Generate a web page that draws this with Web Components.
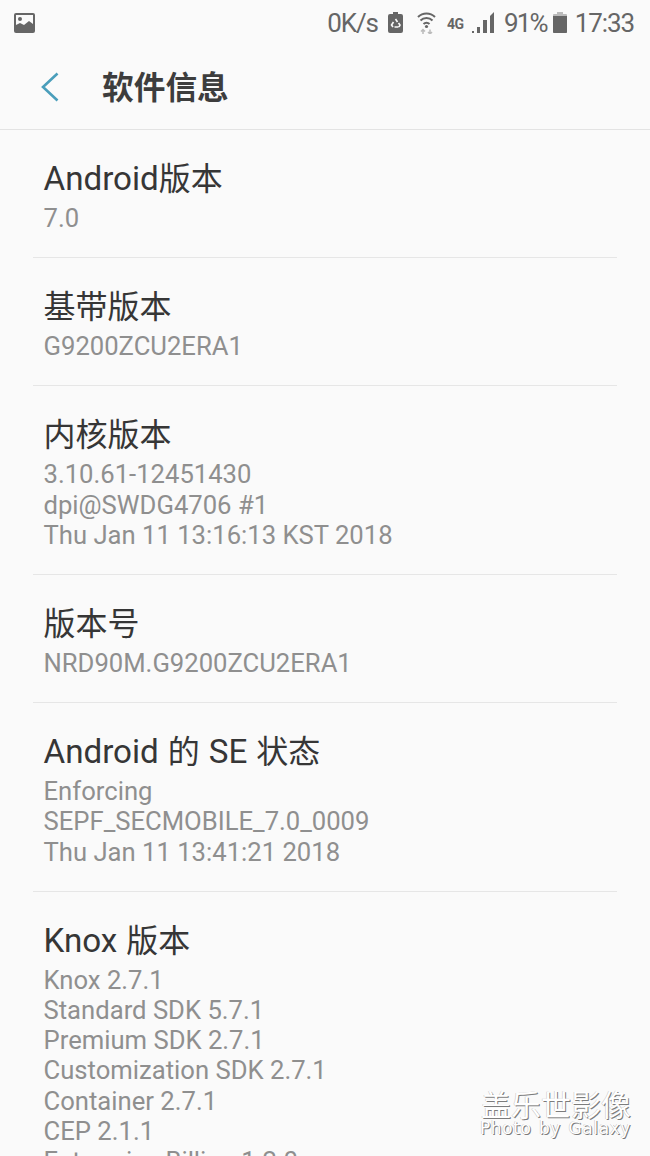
<!DOCTYPE html>
<html lang="zh">
<head>
<meta charset="utf-8">
<title>软件信息</title>
<style>
  html, body { margin: 0; height: 1156px; overflow: hidden; background: #fafafa; }
  body { font-family: Roboto, "Noto Sans CJK SC", sans-serif; }
</style>
</head>
<body>
<settings-page>
  <status-bar></status-bar>
  <app-header>软件信息</app-header>
  <info-row title="Android版本">7.0</info-row>
  <info-row title="基带版本">G9200ZCU2ERA1</info-row>
  <info-row title="内核版本">3.10.61-12451430<br>dpi@SWDG4706 #1<br>Thu Jan 11 13:16:13 KST 2018</info-row>
  <info-row title="版本号">NRD90M.G9200ZCU2ERA1</info-row>
  <info-row title="Android 的 SE 状态">Enforcing<br>SEPF_SECMOBILE_7.0_0009<br>Thu Jan 11 13:41:21 2018</info-row>
  <info-row title="Knox 版本">Knox 2.7.1<br>Standard SDK 5.7.1<br>Premium SDK 2.7.1<br>Customization SDK 2.7.1<br>Container 2.7.1<br>CEP 2.1.1<br>Enterprise Billing 1.2.0</info-row>
  <photo-mark slot="overlay"></photo-mark>
</settings-page>

<script>
class SettingsPage extends HTMLElement {
  constructor() {
    super();
    const shadow = this.attachShadow({ mode: "open" });
    shadow.innerHTML = `
      <style>
        :host {
          display: flex;
          flex-direction: column;
          position: relative;
          width: 650px;
          height: 1156px;
          overflow: hidden;
          background: #fafafa;
          font-family: Roboto, "Noto Sans CJK SC", sans-serif;
        }
      </style>
      <slot></slot>
      <slot name="overlay"></slot>
    `;
  }
}

class StatusBar extends HTMLElement {
  constructor() {
    super();
    const shadow = this.attachShadow({ mode: "open" });
    shadow.innerHTML = `
      <style>
        :host {
          display: flex;
          flex: none;
          align-items: center;
          height: 43px;
          padding: 1px 16px 0 14px;
          color: #666;
          font-size: 26px;
        }
        svg { display: block; flex: none; }
        .right { display: flex; align-items: center; margin-left: auto; }
        .speed { margin-right: 10px; letter-spacing: -1.100px; }
        .wifi { margin-left: 14px; }
        .lte { margin-left: 11px; align-self: flex-start; margin-top: 9px; width: 17px; font-size: 14px; line-height: 14px; font-weight: 700; white-space: nowrap; letter-spacing: -0.300px; }
        .signal { margin-left: 8px; }
        .pct { margin-left: 10px; letter-spacing: -1.800px; }
        .batt { margin-left: 6px; }
        .time { margin-left: 8px; letter-spacing: -1.100px; }
      </style>
      <svg width="21" height="20" viewBox="0 0 21 20">
        <rect x="0" y="0" width="21" height="20" rx="2" fill="#666"/>
        <rect x="2" y="2" width="17" height="14" fill="#fafafa"/>
        <circle cx="6" cy="6" r="2" fill="#666"/>
        <path d="M2 16v-4l4-2 4 2 5-4 4 3v5z" fill="#666"/>
      </svg>
      <div class="right">
        <span class="speed">0K/s</span>
        <svg width="15" height="21" viewBox="0 0 15 21">
          <path d="M5 0h5v2h3a2 2 0 0 1 2 2v15a2 2 0 0 1-2 2H2a2 2 0 0 1-2-2V4a2 2 0 0 1 2-2h3z" fill="#666"/>
          <path d="M7.500 7l2 3M5 15l-1.500-2 2-3M10.500 15h-4M11 15l1-2-1.500-2" fill="none" stroke="#fafafa" stroke-width="1.600"/>
        </svg>
        <svg class="wifi" width="19" height="22" viewBox="0 0 19 22">
          <path d="M1 5a12 12 0 0 1 17 0M3.500 8.500a8.500 8.500 0 0 1 12 0M6.500 12a4.200 4.200 0 0 1 6 0" fill="none" stroke="#666" stroke-width="2"/>
          <circle cx="9.500" cy="14.500" r="1.600" fill="#666"/>
          <path d="M6 22v-4M4 19.500l2-2 2 2M13 17.500v4.500M11 20l2 2 2-2" fill="none" stroke="#bbb" stroke-width="1.500"/>
        </svg>
        <span class="lte">4G</span>
        <svg class="signal" width="22" height="21" viewBox="0 0 22 21">
          <path d="M0 21h2v-2H0zM5 21h3v-6H5zM11 21h4V8h-4zM18 21h4V0l-4 4z" fill="#666"/>
        </svg>
        <span class="pct">91%</span>
        <svg class="batt" width="14" height="21" viewBox="0 0 14 21">
          <path d="M4 0h6v2h3a1 1 0 0 1 1 1v17a1 1 0 0 1-1 1H1a1 1 0 0 1-1-1V3a1 1 0 0 1 1-1h3z" fill="#bbb"/>
          <path d="M0 4h14v16a1 1 0 0 1-1 1H1a1 1 0 0 1-1-1z" fill="#666"/>
        </svg>
        <span class="time">17:33</span>
      </div>
    `;
  }
}

class AppHeader extends HTMLElement {
  constructor() {
    super();
    const shadow = this.attachShadow({ mode: "open" });
    shadow.innerHTML = `
      <style>
        :host {
          display: flex;
          flex: none;
          align-items: center;
          height: 85px;
          border-bottom: 1px solid #e3e3e3;
          padding-left: 41px;
          color: #3d3d3d;
        }
        svg { display: block; flex: none; margin-right: 43px; }
        .title { font-size: 31.700px; font-weight: 700; margin-bottom: 3px; }
      </style>
      <svg width="18" height="30" viewBox="0 0 18 30">
        <path d="M16.500 1.500 2 15l14.500 13.500" fill="none" stroke="#4a9ebb" stroke-width="2.600"/>
      </svg>
      <span class="title"><slot></slot></span>
    `;
  }
}

class InfoRow extends HTMLElement {
  constructor() {
    super();
    const shadow = this.attachShadow({ mode: "open" });
    shadow.innerHTML = `
      <style>
        :host {
          display: block;
          flex: none;
          margin: 0 33px;
          padding: 27px 11px 24px 10.500px;
          border-bottom: 1px solid #e6e6e6;
        }
        .title { font-size: 32px; line-height: 44px; color: #363636; word-spacing: 1px; }
        .title span { font-size: 33.200px; }
        .sub { margin-top: 2px; font-size: 25.650px; line-height: 30.200px; color: #8f8f8f; }
      </style>
      <div class="title"></div>
      <div class="sub"><slot></slot></div>
    `;
    // latin runs sit a bit larger than the cjk ones in the original
    const title = shadow.querySelector(".title");
    for (const part of this.getAttribute("title").split(/([A-Za-z]+)/)) {
      if (/^[A-Za-z]+$/.test(part)) {
        const span = document.createElement("span");
        span.textContent = part;
        title.appendChild(span);
      } else if (part) {
        title.appendChild(document.createTextNode(part));
      }
    }
  }
}

class PhotoMark extends HTMLElement {
  constructor() {
    super();
    const shadow = this.attachShadow({ mode: "open" });
    shadow.innerHTML = `
      <style>
        :host {
          position: absolute;
          right: 19px;
          bottom: 18px;
          display: flex;
          flex-direction: column;
          align-items: flex-end;
          color: #fff;
          text-shadow: 1px 1px 0 #7c7c7c, -0.500px -0.500px 0 #c4c4c4;
        }
        .cn { font-size: 30px; line-height: 30px; font-family: "Noto Sans CJK SC", sans-serif; }
        .en { font-size: 17px; line-height: 20px; letter-spacing: 0.600px; word-spacing: 1.500px; font-family: "DejaVu Sans", sans-serif; }
      </style>
      <div class="cn">盖乐世影像</div>
      <div class="en">Photo by Galaxy</div>
    `;
  }
}

customElements.define("settings-page", SettingsPage);
customElements.define("status-bar", StatusBar);
customElements.define("app-header", AppHeader);
customElements.define("info-row", InfoRow);
customElements.define("photo-mark", PhotoMark);
</script>
</body>
</html>
